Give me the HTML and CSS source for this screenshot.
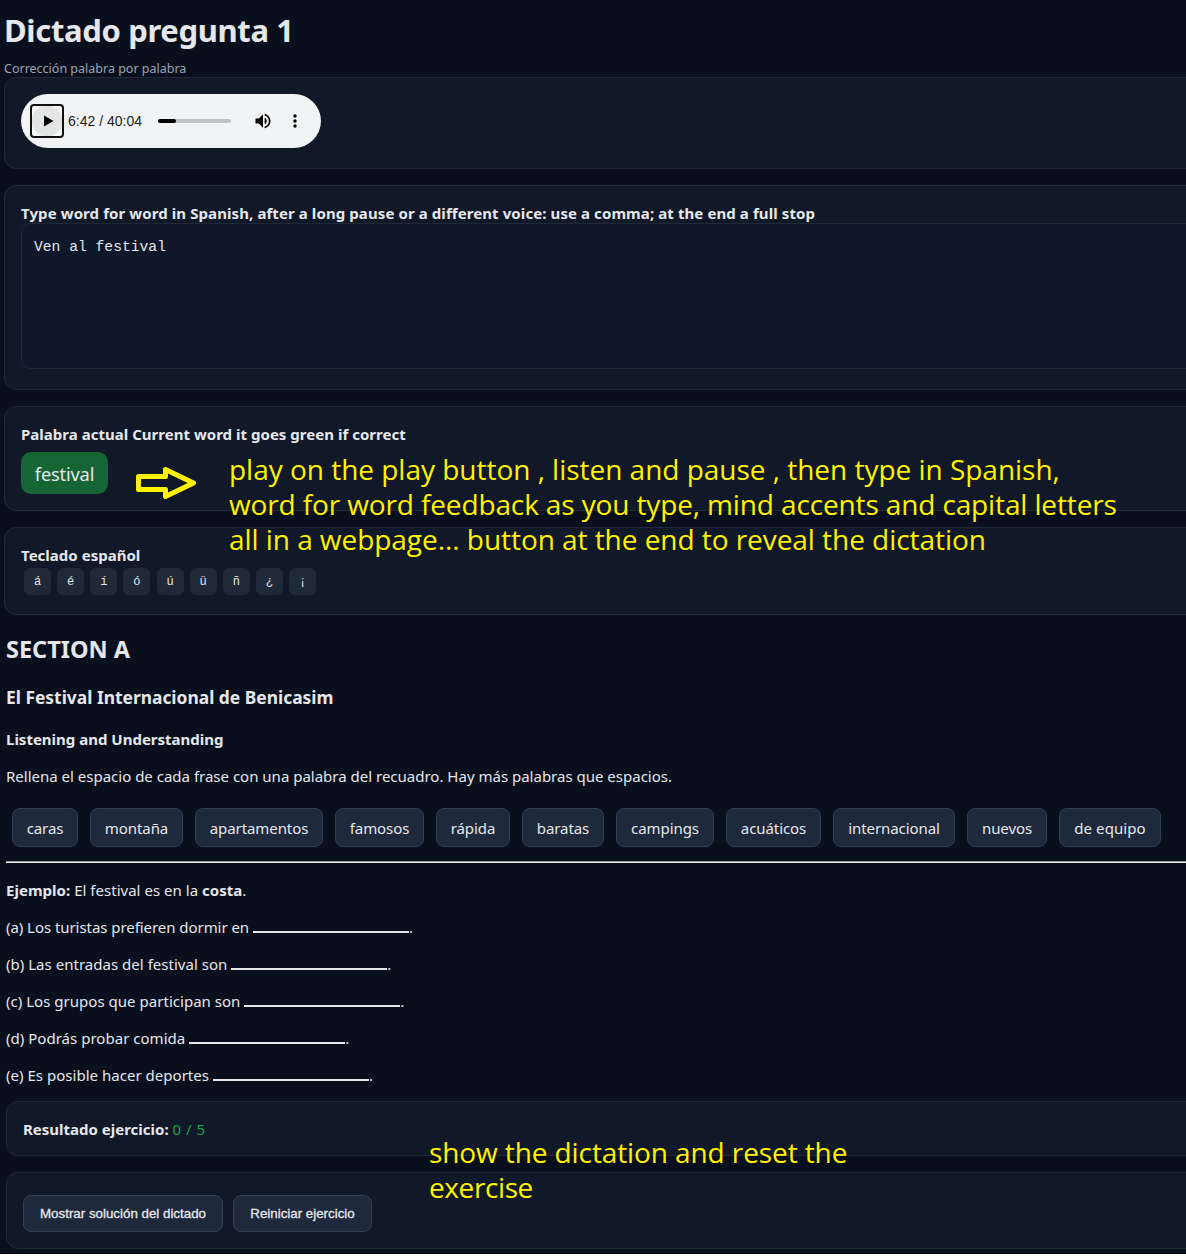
FILE: index.html
```html
<!DOCTYPE html>
<html lang="es">
<head>
<meta charset="utf-8">
<title>Dictado pregunta 1</title>
<link rel="stylesheet" href="styles.css">
</head>
<body>
<div class="page">
  <main class="dictation">
    <h1>Dictado pregunta 1</h1>
    <p class="subtitle">Corrección palabra por palabra</p>

    <section class="card card-audio">
      <div class="player">
        <button class="play" aria-label="Play"><svg width="10" height="12" viewBox="0 0 10 12"><path d="M0 .5v11L9.500 6z"/></svg></button>
        <span class="time">6:42 / 40:04</span>
        <span class="track"><span class="track-fill"></span></span>
        <svg class="volume" width="20" height="20" viewBox="0 0 24 24"><path d="M3 9v6h4l5 5V4L7 9H3zm13.500 3c0-1.770-1.020-3.290-2.500-4.030v8.050c1.480-.73 2.500-2.250 2.500-4.020zM14 3.230v2.060c2.890.86 5 3.540 5 6.710s-2.110 5.850-5 6.710v2.060c4.010-.91 7-4.490 7-8.770s-2.990-7.860-7-8.770z"/></svg>
        <svg class="more" width="20" height="20" viewBox="0 0 24 24"><path d="M12 8c1.100 0 2-.9 2-2s-.9-2-2-2-2 .9-2 2 .9 2 2 2zm0 2c-1.100 0-2 .9-2 2s.9 2 2 2 2-.9 2-2-.9-2-2-2zm0 6c-1.100 0-2 .9-2 2s.9 2 2 2 2-.9 2-2-.9-2-2-2z"/></svg>
      </div>
    </section>

    <section class="card card-typing">
      <div class="label label-typing">Type word for word in Spanish, after a long pause or a different voice: use a comma; at the end a full stop</div>
      <div class="editor">Ven al festival</div>
    </section>

    <section class="card card-word">
      <div class="label">Palabra actual Current word it goes green if correct</div>
      <div class="current-word">festival</div>
    </section>

    <section class="card card-keys">
      <div class="label">Teclado español</div>
      <div class="keys">
        <button>á</button><button>é</button><button>í</button><button>ó</button><button>ú</button><button>ü</button><button>ñ</button><button>¿</button><button>¡</button>
      </div>
    </section>
  </main>

  <section class="exercise">
    <h2>SECTION A</h2>
    <h3>El Festival Internacional de Benicasim</h3>
    <h4>Listening and Understanding</h4>
    <p class="intro">Rellena el espacio de cada frase con una palabra del recuadro. Hay más palabras que espacios.</p>
    <div class="chips">
      <span>caras</span><span>montaña</span><span>apartamentos</span><span>famosos</span><span>rápida</span><span>baratas</span><span>campings</span><span>acuáticos</span><span>internacional</span><span>nuevos</span><span>de equipo</span>
    </div>
    <hr>
    <div class="questions">
      <p><b>Ejemplo:</b> El festival es en la <b>costa</b>.</p>
      <p class="tight">(a) Los turistas prefieren dormir en <span class="blank"></span>.</p>
      <p>(b) Las entradas del festival son <span class="blank"></span>.</p>
      <p>(c) Los grupos que participan son <span class="blank"></span>.</p>
      <p>(d) Podrás probar comida <span class="blank"></span>.</p>
      <p>(e) Es posible hacer deportes <span class="blank"></span>.</p>
    </div>
    <div class="card card-result"><b>Resultado ejercicio:</b> <span class="score">0 / 5</span></div>
    <div class="card card-actions">
      <button class="btn btn-show">Mostrar solución del dictado</button>
      <button class="btn btn-reset">Reiniciar ejercicio</button>
    </div>
  </section>

  <svg class="arrow" width="64" height="36" viewBox="0 0 64 36"><path d="M4.500 11.500h27v-7l28 13.500-28 13.500v-7h-27z"/></svg>
  <div class="note note-top"><span class="l1">play on the play button , listen and pause , then type in Spanish,</span><br><span class="l2">word for word feedback as you type, mind accents and capital letters</span><br><span class="l3">all in a webpage... button at the end to reveal the dictation</span></div>
  <div class="note note-bottom"><span class="l4">show the dictation and reset the</span><br><span class="l5">exercise</span></div>
</div>
</body>
</html>
```
FILE: styles.css
```css
* { box-sizing: border-box; }

html { background: #fff; }

body {
  margin: 0;
  overflow: hidden;
  color: #e5e7eb;
  font: 15px/21px "Noto Sans", "Open Sans", sans-serif;
}

h1, h2, h3, h4, p { margin: 0; }

button { border: 0; padding: 0; color: inherit; }

.page {
  position: relative;
  height: 1254px;
  overflow: hidden;
  background: #0a0f1e;
  border-bottom: 1px solid #050312;
}

.dictation {
  padding: 10px 0 0 4px;
  margin-right: -20px;
}

h1 {
  margin-bottom: 10px;
  font-size: 31px;
  line-height: 40px;
  letter-spacing: -0.35px;
}

.subtitle {
  font-size: 12.5px;
  line-height: 17px;
  color: #9ca3af;
}

.card {
  margin-bottom: 16px;
  padding: 16px;
  background: #111827;
  border: 1px solid #1f2937;
  border-radius: 12px;
}

.label {
  height: 21px;
  font-weight: 700;
  line-height: 23px;
  letter-spacing: 0.02px;
}

.label-typing { letter-spacing: 0.09px; }

.card-audio { height: 92px; }
.card-typing { height: 205px; }
.card-word { height: 105px; }
.card-keys { height: 88px; }

.player {
  display: flex;
  align-items: center;
  width: 300px;
  height: 54px;
  padding-left: 9px;
  border-radius: 27px;
  background: #f1f3f4;
  color: #222;
}

.play {
  display: flex;
  align-items: center;
  width: 34px;
  height: 34px;
  padding-left: 11.5px;
  border: 2px solid #101010;
  border-radius: 4px;
  background: radial-gradient(circle, #e4e5e6 15px, #f8f9f9 16px);
}

.time {
  width: 74px;
  margin: 0 16px 0 4px;
  font: 14px/20px "Liberation Sans", sans-serif;
  white-space: nowrap;
}

.track {
  width: 73px;
  height: 4px;
  border-radius: 2px;
  background: #c1c2c3;
}

.track-fill {
  display: block;
  width: 18px;
  height: 4px;
  border-radius: 2px;
  background: #000;
}

.volume { margin-left: 22px; }
.more { margin-left: 12px; }

.editor {
  height: 146px;
  margin-right: -30px;
  padding: 13px 12px;
  border: 1px solid #1f2937;
  border-radius: 10px;
  background: #0f172a;
  font: 14.67px/20px "Liberation Mono", monospace;
}

.current-word {
  width: 87px;
  height: 42px;
  margin-top: 8px;
  border-radius: 10px;
  background: #166534;
  font-size: 18.3px;
  line-height: 43px;
  letter-spacing: -0.2px;
  text-align: center;
}

.keys {
  display: flex;
  gap: 6.14px;
  padding: 3px 0 0 3px;
}

.keys button {
  width: 27px;
  height: 27px;
  padding-top: 1px;
  border-radius: 6px;
  background: #1f2937;
  font: 12px/26px "Liberation Mono", monospace;
}

.exercise {
  padding: 2px 0 0 6px;
  margin-right: -20px;
}

h2 {
  font-size: 23.5px;
  line-height: 32px;
}

h3 {
  margin-top: 20px;
  font-size: 17.4px;
  line-height: 24px;
}

h4 {
  margin-top: 20px;
  font-size: 15px;
}

.intro { margin-top: 16px; }

.chips {
  display: flex;
  gap: 12px;
  margin: 21px 0 14px 6px;
}

.chips span {
  width: 66px;
  height: 39px;
  border: 1px solid #334155;
  border-radius: 8px;
  background: #1e293b;
  line-height: 38px;
  letter-spacing: -0.08px;
  text-align: center;
  white-space: nowrap;
}

.chips span:nth-child(2) { width: 93px; }
.chips span:nth-child(3) { width: 128px; }
.chips span:nth-child(4) { width: 89px; }
.chips span:nth-child(5) { width: 74px; }
.chips span:nth-child(6) { width: 82px; }
.chips span:nth-child(7) { width: 98px; }
.chips span:nth-child(8) { width: 95px; }
.chips span:nth-child(9) { width: 122px; }
.chips span:nth-child(10) { width: 80px; }
.chips span:nth-child(11) { width: 102px; letter-spacing: 0.1px; }

hr {
  height: 2px;
  margin: 0;
  border: 0;
  border-top: 1px solid #9a9a9a;
  background: #eee;
}

.questions {
  display: grid;
  gap: 16px;
  margin: 17px 0 15px;
}

.questions p { height: 21px; letter-spacing: 0.025px; }
.questions .tight { letter-spacing: -0.055px; }

.blank {
  display: inline-block;
  width: 156px;
  border-bottom: 2px solid #e5e7eb;
}

.card-result {
  height: 55px;
  line-height: 22px;
}

.score { color: #16a34a; letter-spacing: 0.5px; }

.card-actions {
  display: flex;
  gap: 10px;
  height: 77px;
  margin-bottom: 0;
  padding-top: 22px;
}

.btn {
  width: 200px;
  height: 37px;
  border: 1px solid #334155;
  border-radius: 8px;
  background: #1e293b;
  font: 13.333px/35px "Liberation Sans", sans-serif;
  -webkit-text-stroke: 0.3px #e5e7eb;
}

.btn-reset { width: 139px; }

/* Yellow annotations drawn over the page */
.arrow {
  position: absolute;
  left: 134px;
  top: 465px;
  fill: none;
  stroke: #fff200;
  stroke-width: 5;
  stroke-linejoin: round;
}

.note {
  position: absolute;
  color: #fff200;
  font: 28px/35px "Open Sans", sans-serif;
  white-space: nowrap;
}

.note-top { left: 229px; top: 452px; }
.note-bottom { left: 429px; top: 1135px; }

.l1 { letter-spacing: -0.02px; }
.l2 { letter-spacing: -0.13px; }
.l3 { letter-spacing: -0.05px; }
.l4 { letter-spacing: -0.1px; }
.l5 { letter-spacing: -0.4px; }
```
